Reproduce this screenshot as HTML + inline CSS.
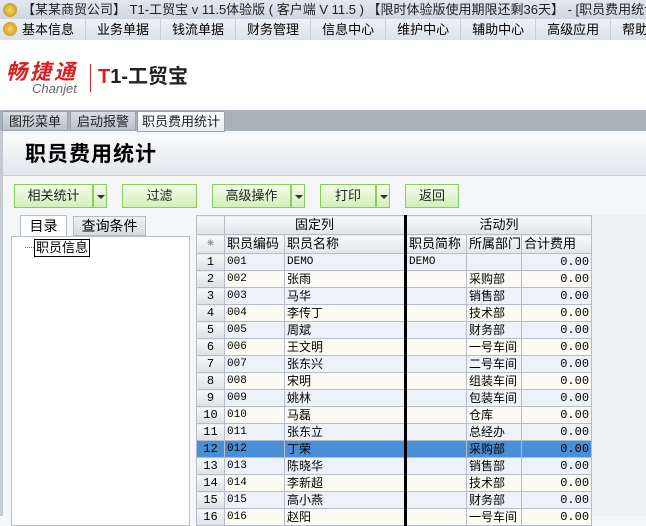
<!DOCTYPE html>
<html><head><meta charset="utf-8"><style>
*{margin:0;padding:0;box-sizing:border-box}
body{width:646px;height:516px;overflow:hidden;font-family:"Liberation Sans","Noto Sans CJK SC",sans-serif;font-size:13px;color:#000;background:#f4f6f8;position:relative}
.abs{position:absolute}
.title{left:0;top:0;width:646px;height:19px;background:linear-gradient(#e3e8ee,#cfd6de);font-size:13px;line-height:19px;padding-left:22px;white-space:nowrap;color:#222}
.coin{width:14px;height:14px;border-radius:50%;background:radial-gradient(#f5d66a,#c08a10);left:3px}
.menu{left:0;top:19px;width:646px;height:21px;background:linear-gradient(#eef1f4,#dde2e8);white-space:nowrap;line-height:21px;font-size:13px}
.menu span{display:inline-block;padding:0 11px;border-right:1px solid #c8ced6}
.logo{left:0;top:40px;width:646px;height:70px;background:#fff}
.tabs{left:0;top:110px;width:646px;height:21px;background:#a9b2ba}
.tab{top:1px;height:20px;line-height:20px;text-align:center;background:linear-gradient(#d8dde2,#b9c1c8);border:1px solid #9aa3ab;color:#222}
.hdr{left:3px;top:134px;width:643px;height:42px;background:linear-gradient(#fafbfc,#e2e6ea);border-bottom:1px solid #c8ced4;font-size:21px;font-weight:bold;line-height:42px;padding-left:22px;letter-spacing:1px}
.btn{top:184px;height:24px;border:1px solid #8ccc5c;background:linear-gradient(#f4fbee,#d2f0b6);text-align:center;line-height:22px;color:#222}
.dd{top:184px;width:14px;height:24px;border:1px solid #8ccc5c;background:linear-gradient(#f4fbee,#d2f0b6)}
.dd:after{content:"";position:absolute;left:3px;top:10px;border:4px solid transparent;border-top:4px solid #333}
table{border-collapse:collapse;font-size:12px}
tr{height:17px}
td{border:1px solid #b5bec8;height:17px;line-height:14px;padding:0 2px;white-space:nowrap;overflow:hidden}
.n{background:linear-gradient(#f6f7f8,#dde1e5);text-align:center;font-family:"Liberation Mono",monospace}
.m{font-family:"Liberation Mono",monospace;font-size:11px}
.r{text-align:right;font-family:"Liberation Mono",monospace}
tr.o td{background:#eef2f8}tr.e td{background:#fbfbf3}
tr.o td.n,tr.e td.n{background:linear-gradient(#f6f7f8,#dde1e5)}
tr.s td{background:#4a8ed6}
tr.th{height:19px}
.th td{background:linear-gradient(#f7f8f9,#e2e5e8);height:19px}
.tk{border-right:3px solid #000!important}
</style></head><body>
<div class="abs title">【某某商贸公司】 T1-工贸宝 v 11.5体验版 ( 客户端 V 11.5 ) 【限时体验版使用期限还剩36天】 - [职员费用统计]</div>
<div class="abs coin" style="top:3px"></div>
<div class="abs menu"><span style="padding-left:22px">基本信息</span><span>业务单据</span><span>钱流单据</span><span>财务管理</span><span>信息中心</span><span>维护中心</span><span>辅助中心</span><span>高级应用</span><span>帮助</span></div>
<div class="abs coin" style="top:22px"></div>
<div class="abs logo">
<div class="abs" style="left:6px;top:22px;line-height:1;color:#d81e1e;font-size:21px;font-weight:bold;font-style:italic;letter-spacing:3px">畅捷通</div>
<div class="abs" style="left:32px;top:42px;line-height:1;color:#666;font-size:13px;font-style:italic">Chanjet</div>
<div class="abs" style="left:90px;top:24px;width:1px;height:28px;background:#d81e1e"></div>
<div class="abs" style="left:98px;top:27px;line-height:1;font-size:20px;font-weight:bold;color:#222"><span style="color:#d81e1e">T</span>1-工贸宝</div>
</div>
<div class="abs tabs">
<div class="abs tab" style="left:2px;width:66px">图形菜单</div>
<div class="abs tab" style="left:70px;width:66px">启动报警</div>
<div class="abs tab" style="left:137px;width:88px;background:linear-gradient(#fdfdfe,#e8ecef);height:21px">职员费用统计</div>
</div>
<div class="abs" style="left:0;top:131px;width:3px;height:385px;background:#c4cbd2"></div>
<div class="abs hdr">职员费用统计</div>
<div class="abs btn" style="left:14px;width:79px">相关统计</div><div class="abs dd" style="left:93px"></div>
<div class="abs btn" style="left:122px;width:75px">过滤</div>
<div class="abs btn" style="left:212px;width:79px">高级操作</div><div class="abs dd" style="left:291px"></div>
<div class="abs btn" style="left:320px;width:56px">打印</div><div class="abs dd" style="left:376px"></div>
<div class="abs btn" style="left:405px;width:54px">返回</div>
<div class="abs" style="left:20px;top:215px;width:47px;height:22px;background:#fff;border:1px solid #b5bec8;border-bottom:none;text-align:center;line-height:21px;font-size:14px">目录</div>
<div class="abs" style="left:73px;top:216px;width:73px;height:20px;background:linear-gradient(#eef0f2,#d6dbe0);border:1px solid #b5bec8;text-align:center;line-height:19px;font-size:14px">查询条件</div>
<div class="abs" style="left:11px;top:236px;width:179px;height:290px;background:#fff;border:1px solid #b5bec8"></div>
<div class="abs" style="left:25px;top:247px;width:9px;border-top:1px dotted #666"></div>
<div class="abs" style="left:34px;top:239px;border:1px solid #000;font-size:13px;line-height:16px;padding:0 1px">职员信息</div>
<div class="abs" style="left:590px;top:215px;width:56px;height:301px;background:#eef0f3"></div>
<table class="abs" style="left:196px;top:215px;width:395px;table-layout:fixed">
<colgroup><col style="width:28px"><col style="width:60px"><col style="width:121px"><col style="width:61px"><col style="width:55px"><col style="width:70px"></colgroup>
<tr class="th"><td class="n"></td><td colspan="2" style="text-align:center;font-size:13px" class="tk">固定列</td><td colspan="3" style="text-align:center;font-size:13px">活动列</td></tr>
<tr class="th" style="height:18px"><td class="n" style="color:#999;height:18px">⁕</td><td style="font-size:13px;height:18px">职员编码</td><td class="tk" style="font-size:13px">职员名称</td><td style="font-size:13px">职员简称</td><td style="font-size:13px">所属部门</td><td style="font-size:13px">合计费用</td></tr>
<tr class="o"><td class="n">1</td><td class="m">001</td><td class="m tk">DEMO</td><td class="m">DEMO</td><td></td><td class="r">0.00</td></tr>
<tr class="e"><td class="n">2</td><td class="m">002</td><td class="tk">张雨</td><td></td><td>采购部</td><td class="r">0.00</td></tr>
<tr class="o"><td class="n">3</td><td class="m">003</td><td class="tk">马华</td><td></td><td>销售部</td><td class="r">0.00</td></tr>
<tr class="e"><td class="n">4</td><td class="m">004</td><td class="tk">李传丁</td><td></td><td>技术部</td><td class="r">0.00</td></tr>
<tr class="o"><td class="n">5</td><td class="m">005</td><td class="tk">周斌</td><td></td><td>财务部</td><td class="r">0.00</td></tr>
<tr class="e"><td class="n">6</td><td class="m">006</td><td class="tk">王文明</td><td></td><td>一号车间</td><td class="r">0.00</td></tr>
<tr class="o"><td class="n">7</td><td class="m">007</td><td class="tk">张东兴</td><td></td><td>二号车间</td><td class="r">0.00</td></tr>
<tr class="e"><td class="n">8</td><td class="m">008</td><td class="tk">宋明</td><td></td><td>组装车间</td><td class="r">0.00</td></tr>
<tr class="o"><td class="n">9</td><td class="m">009</td><td class="tk">姚林</td><td></td><td>包装车间</td><td class="r">0.00</td></tr>
<tr class="e"><td class="n">10</td><td class="m">010</td><td class="tk">马磊</td><td></td><td>仓库</td><td class="r">0.00</td></tr>
<tr class="o"><td class="n">11</td><td class="m">011</td><td class="tk">张东立</td><td></td><td>总经办</td><td class="r">0.00</td></tr>
<tr class="s"><td class="n">12</td><td class="m">012</td><td class="tk">丁荣</td><td></td><td>采购部</td><td class="r">0.00</td></tr>
<tr class="o"><td class="n">13</td><td class="m">013</td><td class="tk">陈晓华</td><td></td><td>销售部</td><td class="r">0.00</td></tr>
<tr class="e"><td class="n">14</td><td class="m">014</td><td class="tk">李新超</td><td></td><td>技术部</td><td class="r">0.00</td></tr>
<tr class="o"><td class="n">15</td><td class="m">015</td><td class="tk">高小燕</td><td></td><td>财务部</td><td class="r">0.00</td></tr>
<tr class="e"><td class="n">16</td><td class="m">016</td><td class="tk">赵阳</td><td></td><td>一号车间</td><td class="r">0.00</td></tr>
</table>
</body></html>
